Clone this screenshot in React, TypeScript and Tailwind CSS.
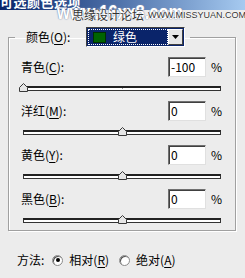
import type { FC } from 'react'

const FONT = { fontFamily: '"Noto Sans CJK SC", "Liberation Sans", sans-serif' }

type Channel = { name: string; key: string; value: number }

const CHANNELS: Channel[] = [
  { name: '青色', key: 'C', value: -100 },
  { name: '洋红', key: 'M', value: 0 },
  { name: '黄色', key: 'Y', value: 0 },
  { name: '黑色', key: 'B', value: 0 },
]

const Thumb: FC<{ left: number }> = ({ left }) => (
  <svg
    width="9"
    height="9"
    viewBox="0 0 9 9"
    className="absolute top-0"
    style={{ left: left - 4 }}
  >
    <path d="M0.5 4.5 L4.5 0.5 L8.5 4.5 L8.5 8.5 L0.5 8.5 Z" fill="#e6e6e6" stroke="#3a3a3a" strokeWidth="1" />
  </svg>
)

const Slider: FC<{ value: number }> = ({ value }) => {
  // track is 198px wide, -100..100
  const pos = 2 + ((value + 100) / 200) * 198
  return (
    <div className="relative h-[9px] mt-[6px] w-[204px]">
      <div className="absolute left-[2px] top-[3px] w-[198px] h-[5px] bg-white border border-[#333] border-t-2 border-t-[#222]" />
      {value !== 0 && <div className="absolute left-[101px] top-[5px] w-px h-px bg-[#999]" />}
      <Thumb left={pos} />
    </div>
  )
}

const Radio: FC<{ checked?: boolean }> = ({ checked }) => (
  <span className="relative inline-flex w-[11px] h-[11px] rounded-full bg-white border border-[#8a8a8a] items-center justify-center shadow-[inset_1px_1px_0_#555]">
    {checked && <span className="w-[4px] h-[4px] rounded-full bg-black" />}
  </span>
)

const Key: FC<{ k: string }> = ({ k }) => <span className="underline underline-offset-2">{k}</span>

const App: FC = () => {
  return (
    <div className="relative w-[245px] h-[278px] bg-[#ececec] overflow-hidden text-[12px] text-black" style={FONT}>
      {/* Title bar */}
      <div className="h-[10px] overflow-hidden bg-gradient-to-r from-[#0a246a] to-[#a6caf0]">
        <div className="-mt-[6px] text-[13px] font-bold text-white leading-[16px] tracking-[0.5px]">可选颜色选项</div>
      </div>

      {/* Watermark */}
      <div
        className="absolute left-[57px] top-[1px] whitespace-nowrap origin-left scale-x-[0.78] text-[21px] font-bold leading-[22px] text-white [text-shadow:0_0_1px_#6d7b9e,0_0_2px_#94a2c0]"
        style={{ fontFamily: '"Liberation Sans", sans-serif' }}
      >
        www.16xx8.com
      </div>
      <div className="absolute left-[72px] top-[8px] flex items-center whitespace-nowrap text-[#333] [text-shadow:0_0_2px_#fff,0_0_1px_#fff,0_0_1px_#fff]">
        <span className="text-[12px] leading-[14px]">思缘设计论坛</span>
        <span className="ml-[4px] text-[9px] leading-[14px]" style={{ fontFamily: '"Liberation Sans", sans-serif' }}>
          WWW.MISSYUAN.COM
        </span>
      </div>

      {/* Group box */}
      <fieldset className="ml-[8px] mt-[17px] w-[228px] border border-[#a0a0a0] shadow-[inset_1px_1px_0_#fff,1px_1px_0_#fff]">
        <legend className="ml-[6px] pl-[11px] pr-[5px]">
          <div className="flex items-center h-[20px]">
            <span className="w-[60px]">
              颜色(<Key k="O" />):
            </span>
            <div className="flex items-center w-[99px] h-[20px] border border-[#404040] border-r-[#fff] border-b-[#fff] bg-[#0a246a] p-[1px]">
              <div className="flex-1 flex items-center h-full border border-dotted border-white pl-[4px]">
                <span className="w-[13px] h-[11px] bg-[#006400] border border-[#003000]" />
                <span className="ml-[7px] text-white leading-none">绿色</span>
              </div>
              <div className="w-[15px] h-full bg-[#e6e6e6] border border-[#fff] border-r-[#404040] border-b-[#404040] flex items-center justify-center">
                <svg width="7" height="4" viewBox="0 0 7 4">
                  <path d="M0 0 H7 L3.5 4 Z" fill="#000" />
                </svg>
              </div>
            </div>
          </div>
        </legend>

        <div className="pl-[12px] pt-[10px] pb-[6px] flex flex-col">
          {CHANNELS.map((c, i) => (
            <div key={c.key} className={i === 0 ? '' : 'mt-[9px]'}>
              <div className="flex items-center h-[20px]">
                <span className="w-[147px]">
                  {c.name}(<Key k={c.key} />):
                </span>
                <div className="w-[38px] h-[20px] bg-white border border-[#707070] border-r-[#e0e0e0] border-b-[#e0e0e0] shadow-[inset_1px_1px_0_#404040] pl-[2px] flex items-center leading-none">
                  {c.value}
                </div>
                <span className="ml-[5px]">%</span>
              </div>
              <Slider value={c.value} />
            </div>
          ))}
        </div>
      </fieldset>

      {/* Method */}
      <div className="flex items-center h-[16px] mt-[21px] pl-[17px]">
        <span>方法:</span>
        <span className="ml-[8px] flex items-center">
          <Radio checked />
        </span>
        <span className="ml-[6px]">
          相对(<Key k="R" />)
        </span>
        <span className="ml-[10px] flex items-center">
          <Radio />
        </span>
        <span className="ml-[6px]">
          绝对(<Key k="A" />)
        </span>
      </div>
    </div>
  )
}

export default App
